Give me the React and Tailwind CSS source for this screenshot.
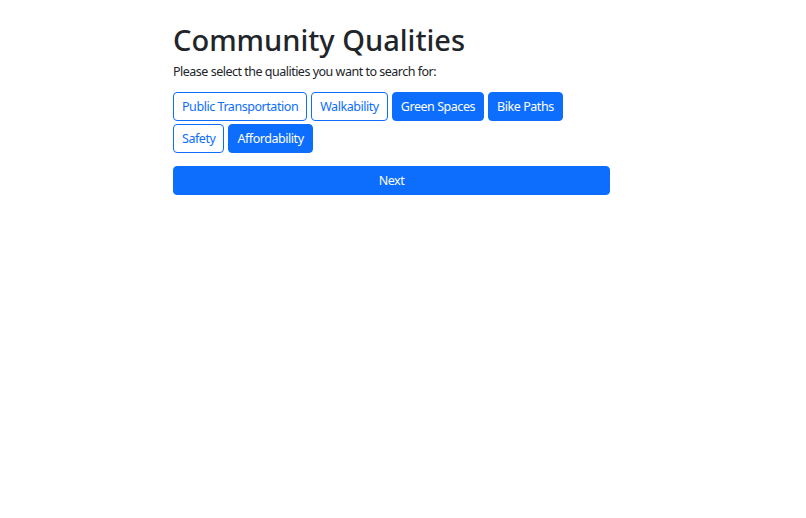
export default function App() {
  const items = [
    ["Public Transportation", false],
    ["Walkability", false],
    ["Green Spaces", true],
    ["Bike Paths", true],
    ["Safety", false],
    ["Affordability", true],
  ];
  const base =
    "rounded-[4px] border border-[#0d6efd] px-[8px] py-[4px] text-[12.5px] leading-[19px] tracking-[-0.45px]";
  return (
    <div className="min-h-[518px] w-[806px] bg-white" style={{ fontFamily: '"Noto Sans", "Open Sans", sans-serif' }}>
      <div className="ml-[173px] w-[437px] pt-[22px]">
        <h1 className="text-[29px] leading-[35px] font-medium text-[#212529]">Community Qualities</h1>
        <p className="mt-[5px] text-[12.5px] leading-[19px] tracking-[-0.5px] text-[#212529]">
          Please select the qualities you want to search for:
        </p>
        <div className="mt-[11px] flex flex-wrap gap-x-[4px] gap-y-[3px]">
          {items.map(([label, on]) => (
            <button
              key={label}
              className={on ? base + " bg-[#0d6efd] text-white" : base + " bg-white text-[#0d6efd]"}
            >
              {label}
            </button>
          ))}
        </div>
        <button className="mt-[13px] w-full rounded-[4px] border border-[#0d6efd] bg-[#0d6efd] py-[4px] text-[12.5px] leading-[19px] tracking-[-0.45px] text-white">
          Next
        </button>
      </div>
    </div>
  );
}
